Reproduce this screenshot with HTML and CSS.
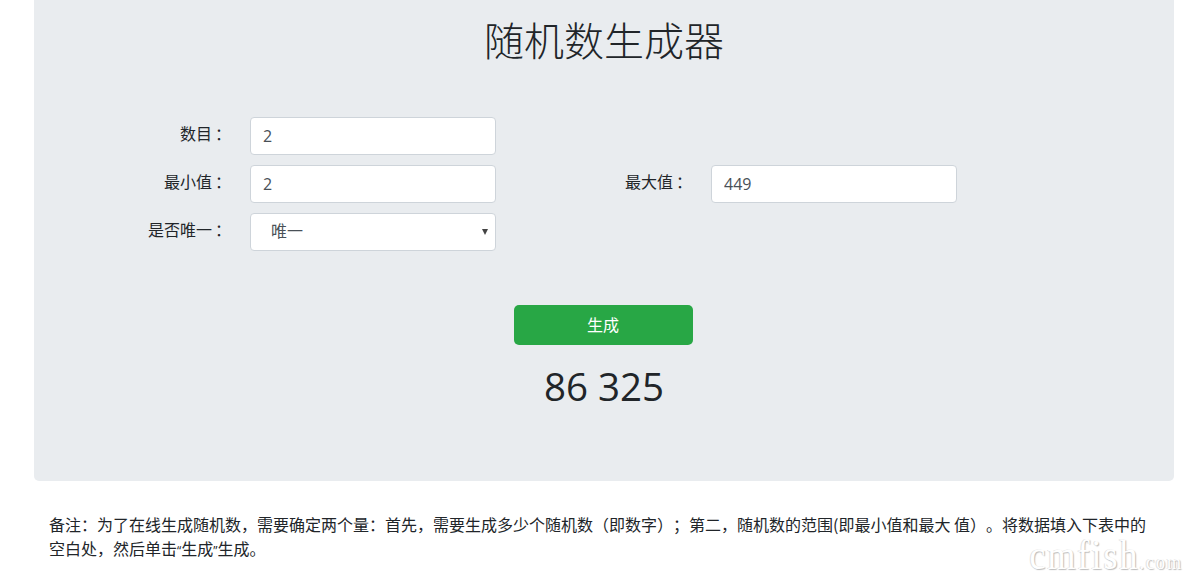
FILE: index.html
```html
<!DOCTYPE html>
<html lang="zh-CN">
<head>
<meta charset="utf-8">
<title>随机数生成器</title>
<link rel="stylesheet" href="styles.css">
</head>
<body>
<main class="page">
  <section class="panel">
    <h1 class="title">随机数生成器</h1>
    <form class="form">
      <div class="row">
        <label class="label">数目<span class="colon">：</span></label>
        <input class="control" type="text" value="2">
      </div>
      <div class="row">
        <label class="label">最小值<span class="colon">：</span></label>
        <input class="control" type="text" value="2">
        <label class="label label-second">最大值<span class="colon">：</span></label>
        <input class="control" type="text" value="449">
      </div>
      <div class="row">
        <label class="label">是否唯一<span class="colon">：</span></label>
        <select class="control select"><option>唯一</option></select>
      </div>
      <div class="actions">
        <button class="button" type="button">生成</button>
      </div>
    </form>
    <div class="result">86 325</div>
  </section>
  <p class="note">备注<span class="colon">：</span>为了在线生成随机数，需要确定两个量<span class="colon">：</span>首先，需要生成多少个随机数（即数字）<span class="colon">；</span>第二，随机数的范围(即最小值和最大 值）。将数据填入下表中的空白处，然后单击<span class="quote">“</span>生成<span class="quote">”</span>生成。</p>
</main>
<div class="watermark">cmfish<span class="watermark-small">.com</span></div>
</body>
</html>
```

FILE: styles.css
```css
* { box-sizing: border-box; }
html, body { height: 100%; }
body {
  margin: 0;
  background: #fff;
  color: #212529;
  font-family: "Open Sans", "Noto Sans CJK SC", sans-serif;
  font-size: 16px;
  line-height: 24px;
  overflow: hidden;
  position: relative;
  text-spacing-trim: space-all;
}
.page { width: 1140px; margin-left: 34px; }
.panel {
  height: 481px;
  padding-top: 11px;
  background: #e9ecef;
  border-radius: 0 0 5px 5px;
}
.title {
  margin: 0;
  text-align: center;
  font-family: "Noto Sans CJK SC", sans-serif;
  font-size: 40px;
  line-height: 56px;
  font-weight: 300;
}
.form { margin-top: 50px; }
.row { display: flex; align-items: center; height: 38px; margin-bottom: 10px; }
.label {
  width: 194px;
  text-align: right;
  font-family: "Noto Sans CJK SC", sans-serif;
  font-size: 16px;
  flex: none;
  position: relative;
  top: -3px;
}
.colon { font-family: "Noto Sans CJK TC", sans-serif; }
.label .colon { margin-left: 3px; margin-right: -3px; }
.quote { font-family: "Open Sans", sans-serif; font-size: 12px; }
.label-second { width: 193px; margin-left: 0; }
.control {
  width: 246px;
  height: 38px;
  margin-left: 22px;
  padding: 6px 12px;
  background: #fff;
  border: 1px solid #ced4da;
  border-radius: 4px;
  color: #495057;
  font-family: "Open Sans", "Noto Sans CJK SC", sans-serif;
  font-size: 16px;
  flex: none;
}
.select {
  appearance: none;
  padding: 3px 20px 7px;
  font-family: "Noto Sans CJK SC", sans-serif;
  background-image: url("data:image/svg+xml,%3Csvg xmlns='http://www.w3.org/2000/svg' width='6' height='6'%3E%3Cpath d='M0 0h6L3 6z' fill='%23444'/%3E%3C/svg%3E");
  background-repeat: no-repeat;
  background-position: right 7px center;
  background-size: 6px 6px;
}
.actions { display: flex; justify-content: center; margin-top: 54px; padding-right: 2px; }
.button {
  width: 179px;
  height: 40px;
  padding: 0 0 2px;
  background: #28a745;
  border: 0;
  border-radius: 5px;
  color: #fff;
  font-family: "Noto Sans CJK SC", sans-serif;
  font-size: 16px;
}
.result {
  margin-top: 13px;
  text-align: center;
  font-size: 38.5px;
  line-height: 56px;
}
.note {
  margin: 31px 0 0;
  padding: 0 19px 0 15px;
  font-family: "Noto Sans CJK SC", sans-serif;
  font-size: 16px;
  line-height: 24px;
  color: #212529;
}
.watermark {
  position: absolute;
  right: 20px;
  bottom: 14px;
  font-family: "Liberation Serif", serif;
  font-size: 36px;
  line-height: 20px;
  letter-spacing: 2px;
  color: #fff;
  text-shadow: 1px 1px 1px #bbb, -1px 0 0 #e2e2e2;
  transform: scaleY(1.2);
  transform-origin: bottom;
}
.watermark-small { font-size: 18px; letter-spacing: 2px; }
```
